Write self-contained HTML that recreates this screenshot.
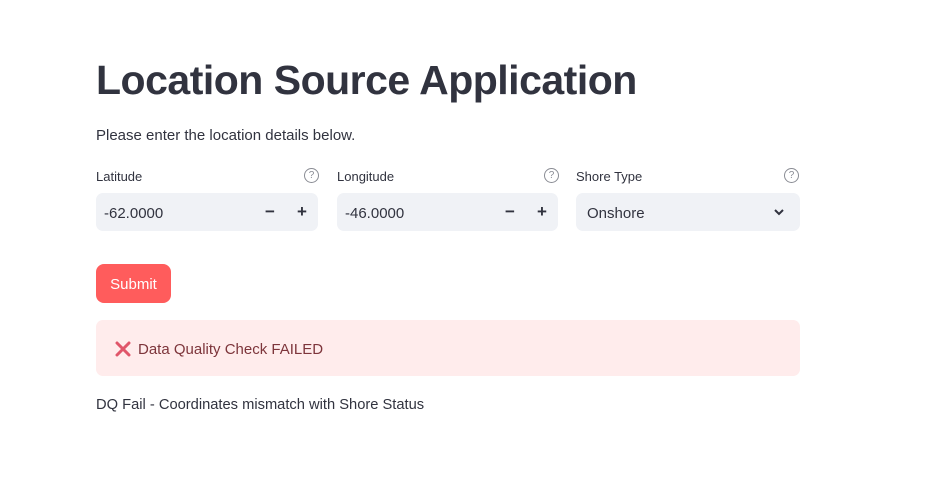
<!DOCTYPE html>
<html><head><style>
body{margin:0;background:#fff;font-family:"Liberation Sans",sans-serif;color:#31333f;width:947px;height:488px;position:relative;overflow:hidden}
.a{position:absolute}
h1{position:absolute;left:96px;top:56px;margin:0;font-size:41px;font-weight:bold;letter-spacing:-0.5px;color:#31333f;line-height:48px}
.lbl{font-size:13px;top:169px}
.q{width:13px;height:13px;border:1.3px solid #8a8c94;border-radius:50%;font-size:10px;line-height:13px;text-align:center;color:#8a8c94;top:168px}
.box{background:#f0f2f6;border-radius:7px;top:193px;height:38px}
.val{font-size:15px;top:205px}
.btn{position:absolute;left:96px;top:264px;width:75px;height:39px;background:#ff5c5c;color:#fff;border-radius:8px;font-size:15px;text-align:center;line-height:41px}
</style></head><body>
<h1>Location Source Application</h1>
<div class="a" style="left:96px;top:127px;font-size:15px">Please enter the location details below.</div>

<div class="a lbl" style="left:96px">Latitude</div>
<div class="a q" style="left:304px">?</div>
<div class="a box" style="left:96px;width:222px"></div>
<div class="a val" style="left:104px">-62.0000</div>
<div class="a" style="left:265px;top:202px;font-size:17px;font-weight:bold">−</div>
<div class="a" style="left:297px;top:202px;font-size:17px;font-weight:bold">+</div>

<div class="a lbl" style="left:337px">Longitude</div>
<div class="a q" style="left:544px">?</div>
<div class="a box" style="left:337px;width:221px"></div>
<div class="a val" style="left:345px">-46.0000</div>
<div class="a" style="left:505px;top:202px;font-size:17px;font-weight:bold">−</div>
<div class="a" style="left:537px;top:202px;font-size:17px;font-weight:bold">+</div>

<div class="a lbl" style="left:576px">Shore Type</div>
<div class="a q" style="left:784px">?</div>
<div class="a box" style="left:576px;width:224px"></div>
<div class="a val" style="left:587px">Onshore</div>
<svg class="a" style="left:773px;top:208px" width="12" height="10"><path d="M2 2 L6 6 L10 2" stroke="#31333f" stroke-width="2" fill="none"/></svg>

<div class="btn">Submit</div>

<div class="a" style="left:96px;top:320px;width:704px;height:56px;background:#ffecec;border-radius:7px"></div>
<svg class="a" style="left:115px;top:341px" width="16" height="16"><path d="M2 2 L14 14 M14 2 L2 14" stroke="#e0566a" stroke-width="3" stroke-linecap="round"/></svg>
<div class="a" style="left:138px;top:341px;font-size:15px;color:#7d353b">Data Quality Check FAILED</div>

<div class="a" style="left:96px;top:397px;font-size:14.7px">DQ Fail - Coordinates mismatch with Shore Status</div>
</body></html>
